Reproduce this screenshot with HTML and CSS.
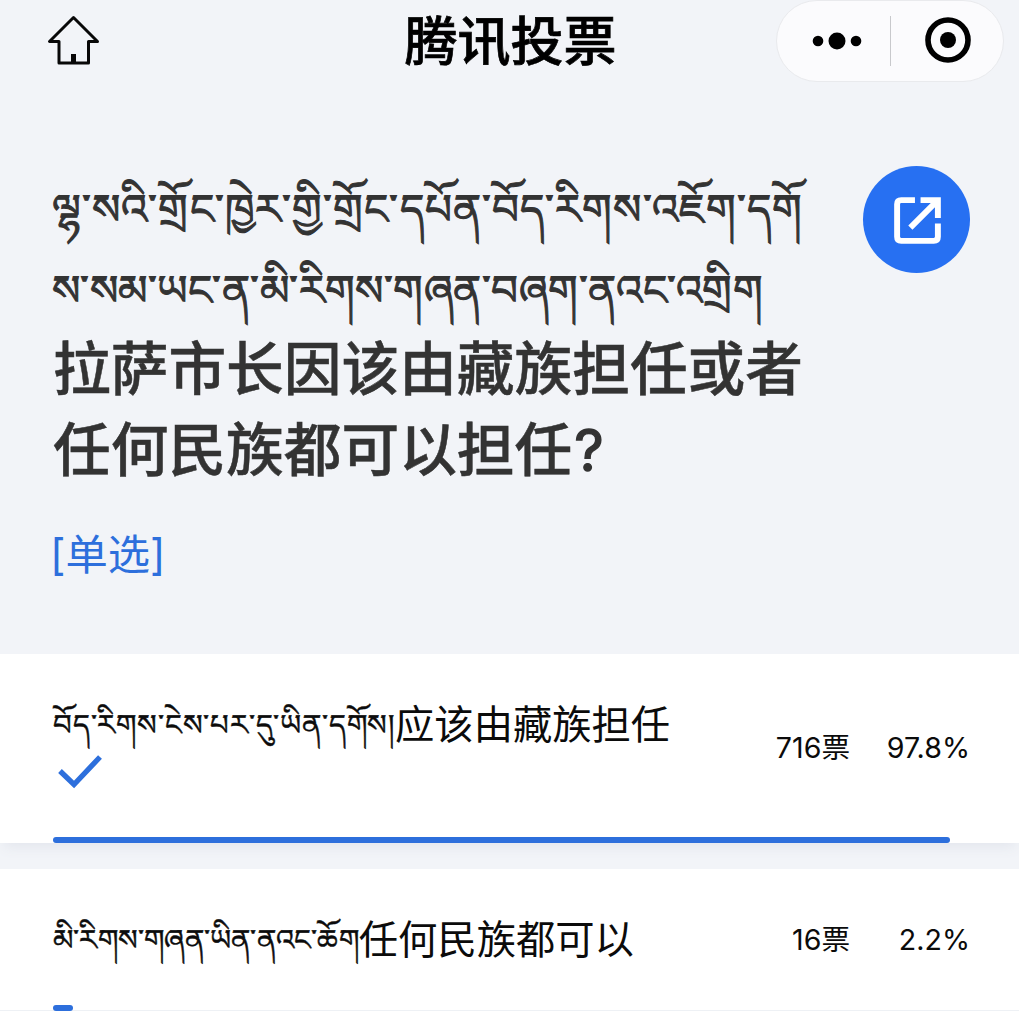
FILE: index.html
```html
<!DOCTYPE html>
<html lang="zh-CN"><head><meta charset="utf-8"><title>腾讯投票</title><link rel="stylesheet" href="styles.css"></head>
<body>
<header class="topbar">
<svg class="home" viewBox="0 0 52 52"><path d="M26.5 2.5 2.5 26.5h9.500v21.500h29.500V26.500h9Z"/><path class="door" d="M26.500 39v9"/></svg>
<h1>腾讯投票</h1>
<div class="capsule"><svg class="dots" viewBox="0 0 50 20"><circle cx="6" cy="10" r="5.300"/><circle cx="25" cy="10" r="8.500"/><circle cx="44" cy="10" r="5.300"/></svg><i class="divider"></i><svg class="target" viewBox="0 0 48 48"><circle cx="24" cy="24" r="20"/><circle class="core" cx="24" cy="24" r="8"/></svg></div>
</header>
<section class="question">
<div class="row"><h2><span class="bo bo1">ལྷ་སའི་གྲོང་ཁྱེར་གྱི་གྲོང་དཔོན་བོད་རིགས་འཇོག་དགོ</span><span class="bo bo2">ས་སམ་ཡང་ན་མི་རིགས་གཞན་བཞག་ནའང་འགྲིག</span><span class="zh">拉萨市长因该由藏族担任或者</span><span class="zh">任何民族都可以担任<b class="mark">?</b></span></h2>
<button class="share" aria-label="分享"><svg viewBox="0 0 52 52"><path d="M23.500 6H10Q6 6 6 10V42Q6 46 10 46H42Q46 46 46 42V29M29 6H46V23.500M44.500 7.500 19 33"/><path class="tip" d="M36 4H48V18Z"/></svg></button></div>
<p class="type">[单选]</p>
</section>
<main>
<article class="option first"><div class="line"><div class="label"><span class="bo bo3">བོད་རིགས་ངེས་པར་དུ་ཡིན་དགོས།</span><span>应该由藏族担任</span></div><span class="votes">716票</span><span class="pct">97.8%</span></div><svg class="check" viewBox="0 0 46 36"><path d="M3 17 17 30.500 43 3"/></svg><div class="bar" style="width:97.8%"></div></article>
<article class="option second"><div class="line"><div class="label"><span class="bo bo4">མི་རིགས་གཞན་ཡིན་ནའང་ཆོག</span><span>任何民族都可以</span></div><span class="votes">16票</span><span class="pct">2.2%</span></div><div class="bar" style="width:2.2%"></div></article>
</main>
</body></html>
```
FILE: styles.css
```css
*{box-sizing:border-box}
body{margin:0;height:1011px;overflow:hidden;background:#f2f4f8;font-family:Inter,"Noto Sans CJK SC",sans-serif;color:#0b0b0b}
.topbar{height:82px;display:grid;grid-template-columns:242px 1fr 242px;align-items:start}
.home{width:52px;height:52px;margin:15px 0 0 47px;fill:none;stroke:#080808;stroke-width:3;stroke-linejoin:round}
.home .door{stroke-width:5}
h1{margin:0 0 0 2px;text-align:center;font-size:53px;line-height:84px;font-weight:500;color:#000;-webkit-text-stroke:.7px #000}
.capsule{width:228px;height:82px;margin-left:-1px;border:1px solid #e9eaed;border-radius:41px;background:#fbfbfd;display:flex;align-items:center}
.dots{width:50px;height:20px;margin-left:35px}
.divider{width:1px;height:50px;background:#c8c9cc;margin-left:28px}
.target{width:48px;height:48px;margin-left:33px;margin-top:-2px;fill:none;stroke:#000;stroke-width:5.6}
.core{fill:#000;stroke:none}
.question{height:572px;padding:84px 49px 0 53px}
.row{display:flex;justify-content:space-between;align-items:flex-start}
h2{margin:0;color:#333;font-size:57.7px;font-weight:500}
h2 span{display:block;height:81px;line-height:83px;white-space:nowrap}
h2 .zh{-webkit-text-stroke:.5px #333}
.mark{font-weight:400;margin-left:2px;-webkit-text-stroke:1.4px #333}
.bo{font-weight:400;white-space:nowrap}
h2 .bo{font-size:42px;line-height:86px;margin-left:-1px;-webkit-text-stroke:1px #333}
h2 .bo1{letter-spacing:1.1px}
h2 .bo2{letter-spacing:.46px}
.share{flex:none;width:107px;height:107px;border:0;border-radius:50%;background:#2770f2;display:flex;align-items:center;justify-content:center;padding:0}
.share svg{width:53px;height:53px;margin:1px 0 0 1px;fill:none;stroke:#fff;stroke-width:5.8}
.share .tip{fill:#fff;stroke:none}
.type{margin:35px 0 0 -3px;font-size:42.3px;line-height:60px;color:#2d6fdc}
.option{background:#fff;padding:0 49px 0 53px;display:flex;flex-direction:column}
.first{height:189px;margin-bottom:26px;box-shadow:0 8px 12px -4px #e3e6ed}
.second{height:142px;border-bottom:1px solid #eef1f5}
.second .bar{position:relative;top:1px}
.line{display:flex;font-size:39.3px}
.label{flex:1;display:flex;line-height:60px;height:100px;padding-top:41px;white-space:nowrap}
.label .bo{font-size:29.1px;-webkit-text-stroke:.5px #111}
.label .bo3{letter-spacing:.82px}
.label .bo4{letter-spacing:.2px}
.votes,.pct{height:100px;font-size:28.6px;line-height:40px;padding-top:74px;text-align:right;margin-right:1px}
.second .votes,.second .pct{padding-top:51px}
.pct{width:119px;margin-right:0}
.check{width:46px;height:36px;margin:0 0 0 4px;display:block;fill:none;stroke:#2d6fdc;stroke-width:5.3}
.bar{height:6px;margin-top:auto;border-radius:3px;background:#2d6fdc}
```
